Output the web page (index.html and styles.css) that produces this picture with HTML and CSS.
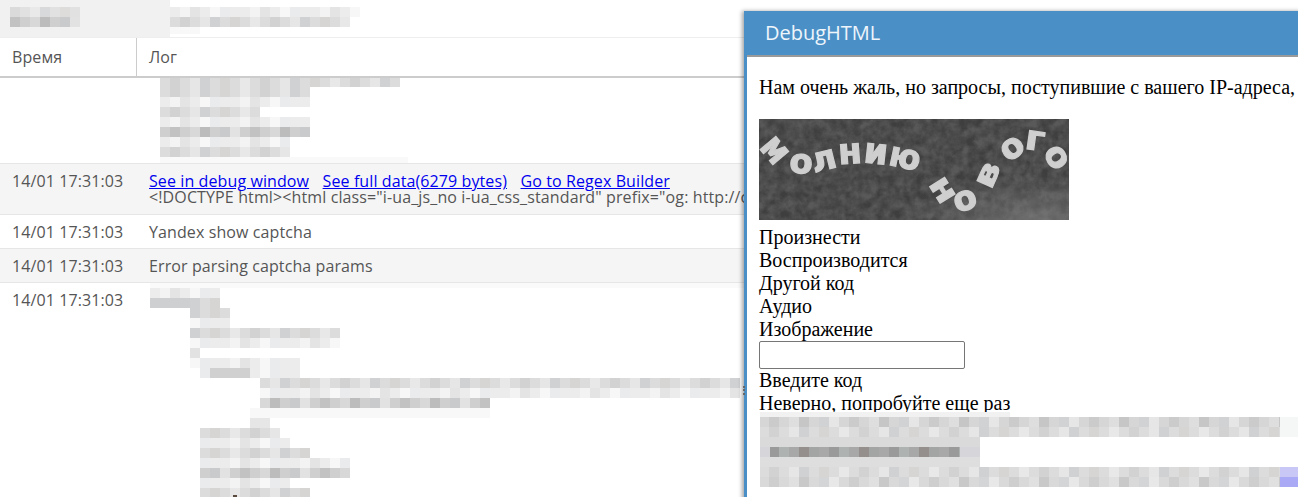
FILE: index.html
```html
<!DOCTYPE html>
<html lang="ru">
<head>
<meta charset="utf-8">
<title>Log</title>
<link rel="stylesheet" href="styles.css">
</head>
<body>
<svg class="defs" aria-hidden="true">
  <defs>
    <pattern id="pale" patternUnits="userSpaceOnUse" width="70" height="10">
      <rect width="70" height="10" fill="#ececec"/><rect x="10" width="10" height="10" fill="#f3f3f3"/><rect x="20" width="10" height="10" fill="#e4e4e4"/><rect x="40" width="10" height="10" fill="#f7f7f7"/><rect x="50" width="10" height="10" fill="#e9ebec"/>
    </pattern>
    <pattern id="mid" patternUnits="userSpaceOnUse" width="90" height="10">
      <rect width="90" height="10" fill="#dcdcdc"/><rect x="10" width="10" height="10" fill="#d2d2d2"/><rect x="30" width="10" height="10" fill="#e6e6e6"/><rect x="40" width="10" height="10" fill="#cfd1d3"/><rect x="60" width="10" height="10" fill="#d6d5d3"/><rect x="80" width="10" height="10" fill="#e8e8e8"/>
    </pattern>
    <pattern id="dark" patternUnits="userSpaceOnUse" width="80" height="10">
      <rect width="80" height="10" fill="#cfcfcf"/><rect x="10" width="10" height="10" fill="#c2c2c2"/><rect x="30" width="10" height="10" fill="#d8d8d8"/><rect x="40" width="10" height="10" fill="#bcbcbc"/><rect x="60" width="10" height="10" fill="#c8cacc"/><rect x="70" width="10" height="10" fill="#e2e2e2"/>
    </pattern>
    <pattern id="deep" patternUnits="userSpaceOnUse" width="60" height="10">
      <rect width="60" height="10" fill="#a8a8a8"/><rect x="10" width="10" height="10" fill="#9a9a9a"/><rect x="20" width="10" height="10" fill="#aeb3b2"/><rect x="40" width="10" height="10" fill="#948f8c"/><rect x="50" width="10" height="10" fill="#a3a5a5"/>
    </pattern>
  </defs>
</svg>

<header class="topbar">
  <div class="topbar-left">
    <svg class="mosaic" width="170" height="37" shape-rendering="crispEdges" aria-hidden="true">
      <rect x="10" y="7" width="70" height="10" fill="url(#mid)" opacity=".75"/>
      <rect x="10" y="17" width="70" height="10" fill="url(#dark)"/>
    </svg>
  </div>
  <svg class="mosaic" width="200" height="37" shape-rendering="crispEdges" aria-hidden="true">
    <rect y="7" width="190" height="10" fill="url(#pale)"/>
    <rect y="17" width="180" height="10" fill="url(#mid)"/>
    <rect y="27" width="30" height="7" fill="#f8f8f8"/>
  </svg>
</header>

<main class="log">
  <div class="row head">
    <div class="time">Время</div>
    <div class="msg">Лог</div>
  </div>

  <div class="row tall">
    <div class="time"></div>
    <svg class="mosaic first-blur" width="260" height="85" shape-rendering="crispEdges" aria-hidden="true">
      <rect width="240" height="9" fill="url(#mid)"/>
      <rect y="9" width="150" height="10" fill="url(#mid)"/>
      <rect y="19" width="150" height="10" fill="url(#pale)"/>
      <rect y="29" width="100" height="10" fill="url(#mid)"/>
      <rect y="39" width="150" height="10" fill="url(#pale)"/>
      <rect y="49" width="150" height="10" fill="url(#dark)"/>
      <rect y="59" width="130" height="10" fill="url(#pale)"/>
      <rect y="69" width="130" height="10" fill="url(#mid)"/>
      <rect y="79" width="248" height="6" fill="#f9f9f9"/>
    </svg>
  </div>

  <div class="row alt data">
    <div class="time">14/01 17:31:03</div>
    <div class="msg">
      <div class="links"><a href="#">See in debug window</a><a href="#">See full data(6279 bytes)</a><a href="#">Go to Regex Builder</a></div>
      <div class="raw">&lt;!DOCTYPE html&gt;&lt;html class="i-ua_js_no i-ua_css_standard" prefix="og: http://ogp.me/ns#"&gt;</div>
    </div>
  </div>

  <div class="row">
    <div class="time">14/01 17:31:03</div>
    <div class="msg">Yandex show captcha</div>
  </div>

  <div class="row alt">
    <div class="time">14/01 17:31:03</div>
    <div class="msg">Error parsing captcha params</div>
  </div>

  <div class="row last">
    <div class="time">14/01 17:31:03</div>
    <svg class="mosaic last-blur" width="610" height="214" shape-rendering="crispEdges" aria-hidden="true">
      <rect width="600" height="5" fill="#fafafa"/>
      <rect y="5" width="70" height="10" fill="url(#pale)"/>
      <rect y="15" width="40" height="10" fill="#cdcfd0"/><rect x="40" y="15" width="30" height="10" fill="url(#mid)"/>
      <rect x="40" y="25" width="40" height="10" fill="url(#mid)"/>
      <rect x="40" y="35" width="40" height="10" fill="url(#pale)"/>
      <rect x="40" y="45" width="150" height="10" fill="url(#mid)"/>
      <rect x="40" y="55" width="150" height="10" fill="url(#pale)"/>
      <rect x="40" y="65" width="10" height="10" fill="#e2e2e2"/>
      <rect x="40" y="75" width="110" height="10" fill="url(#pale)"/>
      <rect x="50" y="85" width="100" height="10" fill="url(#pale)"/><rect x="60" y="85" width="40" height="10" fill="#d0d0d0"/>
      <rect x="110" y="95" width="480" height="10" fill="url(#mid)"/>
      <rect x="110" y="105" width="480" height="10" fill="url(#pale)"/>
      <rect x="110" y="115" width="230" height="10" fill="url(#dark)"/>
      <rect x="100" y="125" width="240" height="10" fill="#f8f8f8"/>
      <rect x="100" y="135" width="20" height="10" fill="#e6e6e6"/>
      <rect x="50" y="145" width="80" height="10" fill="url(#mid)"/>
      <rect x="50" y="155" width="90" height="10" fill="url(#pale)"/>
      <rect x="50" y="165" width="110" height="10" fill="url(#mid)"/>
      <rect x="50" y="175" width="150" height="10" fill="url(#pale)"/>
      <rect x="50" y="185" width="150" height="10" fill="url(#dark)"/>
      <rect x="50" y="195" width="90" height="10" fill="url(#pale)"/>
      <rect x="50" y="205" width="110" height="9" fill="url(#mid)"/>
      <rect x="83" y="212" width="4" height="2" fill="#5a4a40"/>
    </svg>
  </div>
</main>

<section class="dialog">
  <span class="grip" aria-hidden="true"></span>
  <h2 class="dialog-title">DebugHTML</h2>
  <div class="dialog-body">
    <p class="sorry">Нам очень жаль, но запросы, поступившие с вашего IP-адреса, похожи на автоматические.</p>
    <svg class="captcha" width="310" height="101" viewBox="0 0 310 101" aria-label="captcha">
      <defs>
        <filter id="grain" x="0" y="0" width="100%" height="100%">
          <feTurbulence type="fractalNoise" baseFrequency="0.11" numOctaves="5" seed="11"/>
          <feColorMatrix type="matrix" values="0 0 0 0 .1  0 0 0 0 .1  0 0 0 0 .1  1.3 1.3 0 0 -.8"/>
        </filter>
        <filter id="soft"><feGaussianBlur stdDeviation=".4"/></filter>
        <radialGradient id="glow" cx=".9" cy="1" r=".45">
          <stop offset="0" stop-color="#8a8a8a" stop-opacity=".55"/>
          <stop offset="1" stop-color="#8a8a8a" stop-opacity="0"/>
        </radialGradient>
      </defs>
      <rect width="310" height="101" fill="#3e3e3e"/>
      <rect width="310" height="101" filter="url(#grain)"/>
      <rect width="310" height="101" fill="url(#glow)"/>
      <g class="captcha-word" filter="url(#soft)">
        <text y="10" transform="translate(16 31) rotate(50) scale(.9 1.1)">м</text>
        <text y="10" transform="translate(42 44) rotate(4)">о</text>
        <text y="10" transform="translate(65 41) rotate(-14)">л</text>
        <text y="10" transform="translate(91 34) rotate(-4) scale(1 1.05)">н</text>
        <text y="10" transform="translate(117 34) rotate(6) scale(1 1.05)">и</text>
        <text y="10" transform="translate(146 39) rotate(12) scale(.95 1)">ю</text>
        <text y="10" transform="translate(184 71) rotate(58) scale(1.1 .95)">н</text>
        <text y="10" transform="translate(206 81) rotate(-18)">о</text>
        <text y="10" transform="translate(229 56) rotate(-66) scale(1.2 .9)">в</text>
        <text y="10" transform="translate(253 29) rotate(-38)">о</text>
        <text y="10" transform="translate(276 21) rotate(8) scale(1.1 1)">г</text>
        <text y="10" transform="translate(298 38) rotate(58)">о</text>
      </g>
    </svg>
    <div class="line">Произнести</div>
    <div class="line">Воспроизводится</div>
    <div class="line">Другой код</div>
    <div class="line">Аудио</div>
    <div class="line">Изображение</div>
    <input class="code" type="text" aria-label="Введите код">
    <div class="line">Введите код</div>
    <div class="line">Неверно, попробуйте еще раз</div>
    <svg class="mosaic modal-blur" width="539" height="78" shape-rendering="crispEdges" aria-hidden="true">
      <rect x="1" width="250" height="5" fill="#f1f1f1"/>
      <rect x="1" y="5" width="520" height="10" fill="url(#dark)" opacity=".85"/>
      <rect x="1" y="15" width="520" height="10" fill="url(#mid)"/>
      <rect x="521" y="5" width="18" height="20" fill="#f5f6f6"/>
      <rect x="1" y="25" width="220" height="10" fill="#dadada"/>
      <rect x="1" y="35" width="220" height="10" fill="#d6d6da"/>
      <rect x="11" y="35" width="190" height="10" fill="url(#deep)"/>
      <rect x="1" y="45" width="220" height="10" fill="#dedede"/>
      <rect x="1" y="55" width="520" height="10" fill="url(#mid)"/>
      <rect x="1" y="65" width="520" height="10" fill="url(#dark)" opacity=".8"/>
      <rect x="521" y="55" width="18" height="10" fill="#c8c7f5"/>
      <rect x="521" y="65" width="18" height="10" fill="#aaa9f5"/>
    </svg>
  </div>
</section>
</body>
</html>
```

FILE: styles.css
```css
* { box-sizing: border-box; }
html, body {
  margin: 0;
  height: 497px;
  overflow: hidden;
  background: #fff;
}
body {
  position: relative;
  font-family: "Open Sans", sans-serif;
  font-size: 16px;
  color: #555;
}
.defs { position: absolute; width: 0; height: 0; }
.mosaic { display: block; flex: none; }

.topbar {
  display: flex;
  height: 38px;
  border-bottom: 1px solid #eee;
}
.topbar-left {
  width: 170px;
  height: 37px;
  background: #f1f1f1;
}

.row {
  display: grid;
  grid-template-columns: 137px 1fr;
  min-height: 34px;
  border-bottom: 1px solid #e6e6e6;
  line-height: 20px;
  letter-spacing: .1px;
}
.time { padding: 7px 0 6px 12px; }
.msg { padding: 7px 0 6px 12px; white-space: nowrap; overflow: hidden; }
.alt { background: #f5f5f5; }

.head {
  height: 40px;
  border-bottom: 2px solid #ccc;
}
.head .time {
  padding-top: 9px;
  border-right: 1px solid #ccc;
}
.head .msg { padding-top: 9px; }

.tall { height: 86px; }
.first-blur { margin-left: 23px; }
.data { height: 51px; }
.data .msg { padding-top: 9px; line-height: 16px; }
.data .time { padding-top: 7px; }
.links { display: flex; gap: 13.5px; }
.links a { color: #00e; }
.raw { letter-spacing: .12px; }
.last { border-bottom: 0; height: 214px; }
.last-blur { margin-left: 13px; }

.dialog {
  position: absolute;
  left: 744px;
  top: 11px;
  width: 700px;
  height: 500px;
  background: #fff;
  border: 3px solid #4a90c6;
  border-right: 0;
  box-shadow: -2px 0 4px rgba(0, 0, 0, .35);
}
.grip {
  position: absolute;
  left: -4px;
  top: 372px;
  height: 9px;
  border-left: 2px dotted #666;
}
.dialog-title {
  margin: 0;
  height: 43px;
  padding: 7px 0 0 18px;
  background: #4a90c6;
  border-bottom: 2px solid #9a9a9a;
  color: #eef5fb;
  font-size: 20px;
  line-height: 24px;
  font-weight: 400;
}
.dialog-body {
  padding: 19px 12px 0;
  font-family: "Liberation Serif", serif;
  font-size: 20px;
  line-height: 23px;
  color: #000;
}
.sorry { margin: 0 0 20px; white-space: nowrap; }
.captcha { display: block; margin-bottom: 6px; }
.captcha-word {
  font-family: "DejaVu Sans", sans-serif;
  font-weight: 700;
  font-size: 34px;
  text-anchor: middle;
  fill: #cfcfcf;
  stroke: #cfcfcf;
  stroke-width: 1.2px;
}
.line { height: 23px; }
.code {
  display: block;
  width: 206px;
  height: 28px;
  margin: 0;
  padding: 1px 2px;
  border: 1px solid #767676;
  border-radius: 2px;
  background: #fff;
}
.modal-blur { margin-top: -3px; }
```
